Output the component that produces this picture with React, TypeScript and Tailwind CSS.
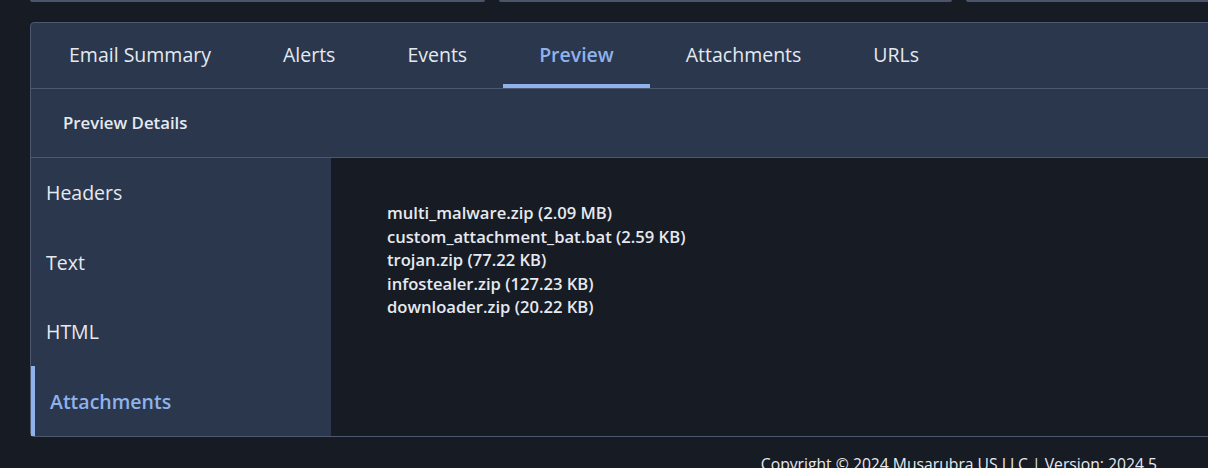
const tabs = ["Email Summary", "Alerts", "Events", "Preview", "Attachments", "URLs"];
const sideItems = [
  { label: "Headers", h: "h-[70px]" },
  { label: "Text", h: "h-[69px]" },
  { label: "HTML", h: "h-[69px]" },
  { label: "Attachments", h: "h-[70px]" },
];
const files = [
  "multi_malware.zip (2.09 MB)",
  "custom_attachment_bat.bat (2.59 KB)",
  "trojan.zip (77.22 KB)",
  "infostealer.zip (127.23 KB)",
  "downloader.zip (20.22 KB)",
];

export default function App() {
  const activeTab = "Preview";
  const activeSide = "Attachments";

  return (
    <div
      className="h-[468px] w-[1208px] overflow-hidden bg-[#161b24] text-[#e6e9ef]"
      style={{ fontFamily: '"Open Sans", "Noto Sans", sans-serif' }}
    >
      {/* bottom edges of the cards above */}
      <div className="flex gap-[14px] pl-[30px]">
        <div className="h-[2px] w-[455px] shrink-0 rounded-b bg-[#4a5569]" />
        <div className="h-[2px] w-[453px] shrink-0 rounded-b bg-[#4a5569]" />
        <div className="h-[2px] w-[300px] shrink-0 rounded-b bg-[#4a5569]" />
      </div>

      <div className="ml-[30px] mt-[20px] w-[1240px] rounded-l-sm border border-[#4b586d] bg-[#2a374d]">
        <div className="flex h-[66px] border-b border-[#4b586d] pl-[2px]">
          {tabs.map((t) => {
            const active = t === activeTab;
            return (
              <div
                key={t}
                className={
                  active
                    ? "flex items-center border-b-4 border-[#8fb2ec] px-9 pt-[3px] text-[19.5px] font-semibold text-[#8fb2ec]"
                    : "flex items-center border-b-4 border-transparent px-9 pt-[3px] text-[19.5px] text-[#e6e9ef]"
                }
              >
                {t}
              </div>
            );
          })}
        </div>

        <div className="flex h-[69px] items-center border-b border-[#4b586d] pl-[32px] text-[16.8px] font-semibold">
          Preview Details
        </div>

        <div className="flex">
          <div className="w-[300px] bg-[#2a374d]">
            {sideItems.map((s) => {
              const active = s.label === activeSide;
              return (
                <div
                  key={s.label}
                  className={
                    active
                      ? `flex ${s.h} items-center border-l-4 border-[#8fb2ec] pl-[15px] pt-[2px] text-[19.5px] font-semibold text-[#8fb2ec]`
                      : `flex ${s.h} items-center pl-[15px] text-[19.5px] text-[#e6e9ef]`
                  }
                >
                  {s.label}
                </div>
              );
            })}
          </div>
          <div className="flex-1 bg-[#161b24] pl-[56px] pt-[43px]">
            {files.map((f) => (
              <div key={f} className="text-[16.6px] font-semibold leading-[23.5px] text-[#e6e9ef]">
                {f}
              </div>
            ))}
          </div>
        </div>
      </div>

      <div className="flex justify-end pr-[51px] pt-[16px] text-[15.7px] text-[#e6e9ef]">
        Copyright © 2024 Musarubra US LLC | Version: 2024.5
      </div>
    </div>
  );
}
